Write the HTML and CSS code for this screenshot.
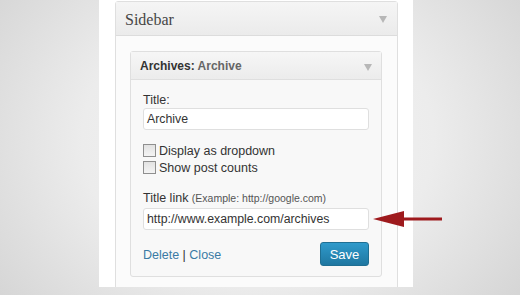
FILE: index.html
```html
<!DOCTYPE html>
<html>
<head>
<meta charset="utf-8">
<link rel="stylesheet" href="styles.css">
</head>
<body>
<div class="stage">
  <div class="panel">
    <div class="sidebar">
      <div class="sidebar-head">
        <h3 class="sidebar-title">Sidebar</h3>
        <span class="tri"></span>
      </div>
      <div class="sidebar-body">
        <div class="widget">
          <div class="widget-head">
            <h4 class="widget-title">Archives: <span class="widget-sub">Archive</span></h4>
            <span class="tri"></span>
          </div>
          <div class="widget-body">
            <div class="label">Title:</div>
            <div class="field">Archive</div>
            <div class="checks">
              <div class="check"><span class="box"></span>Display as dropdown</div>
              <div class="check"><span class="box"></span>Show post counts</div>
            </div>
            <div class="label label-link">Title link <small>(Example: http://google.com)</small></div>
            <div class="field field-link">http://www.example.com/archives</div>
            <div class="actions">
              <div class="links"><a class="lnk">Delete</a> | <a class="lnk">Close</a></div>
              <button class="save">Save</button>
            </div>
          </div>
        </div>
      </div>
    </div>
  </div>
  <svg class="arrow" width="72" height="18" viewBox="0 0 72 18">
    <polygon points="0,9 31,1 31,17" fill="#9e1a1d"/>
    <rect x="30" y="7.5" width="39" height="3" fill="#9e1a1d"/>
  </svg>
</div>
</body>
</html>
```
FILE: styles.css
```css
* { box-sizing: border-box; }
html, body { margin: 0; padding: 0; }
body {
  width: 520px;
  height: 295px;
  overflow: hidden;
  font-family: "Liberation Sans", Arial, sans-serif;
  background: radial-gradient(ellipse 320px 260px at 258px 140px, #f6f6f6 0%, #ececec 55%, #d6d6d6 100%);
}
.stage {
  position: relative;
  width: 520px;
  height: 295px;
}
.panel {
  margin-left: 99px;
  width: 314px;
  height: 287px;
  background: #fff;
  padding: 1px 15px 0 16px;
  overflow: hidden;
}
.sidebar {
  border: 1px solid #dfdfdf;
  border-radius: 3px 3px 0 0;
  background: #fbfbfb;
  height: 300px;
}
.sidebar-head {
  height: 34px;
  display: flex;
  align-items: center;
  justify-content: space-between;
  padding: 0 10px 0 9px;
  background: linear-gradient(#f5f5f5, #ebebeb);
  border-bottom: 1px solid #dcdcdc;
}
.sidebar-title {
  margin: 0;
  font-family: "Liberation Serif", "Times New Roman", serif;
  font-weight: normal;
  font-size: 16px;
  color: #464646;
  padding-top: 2px;
}
.tri {
  width: 0;
  height: 0;
  border-left: 4px solid transparent;
  border-right: 4px solid transparent;
  border-top: 7px solid #b7b7b7;
  margin-top: 2px;
}
.sidebar-body {
  padding: 15px 15px 0 14px;
}
.widget {
  border: 1px solid #dfdfdf;
  border-radius: 3px;
  background: #f8f8f8;
}
.widget-head {
  height: 28px;
  display: flex;
  align-items: center;
  justify-content: space-between;
  padding: 0 9px 0 9px;
  background: linear-gradient(#f6f6f6, #ececec);
  border-bottom: 1px solid #dfdfdf;
}
.widget-title {
  margin: 0;
  font-size: 12px;
  font-weight: bold;
  color: #333;
}
.widget-sub { color: #666; }
.widget-head .tri { margin-top: 4px; }
.widget-body {
  padding: 12px 12px 10px 12px;
}
.label {
  font-size: 12.5px;
  line-height: 16px;
  color: #333;
}
.label small {
  font-size: 10.5px;
  color: #555;
}
.field {
  height: 22px;
  border: 1px solid #dfdfdf;
  border-radius: 3px;
  background: #fff;
  font-size: 12.3px;
  line-height: 20px;
  color: #333;
  padding-left: 3px;
}
.checks {
  margin-top: 12px;
}
.check {
  display: flex;
  align-items: center;
  height: 17px;
  font-size: 12.5px;
  color: #333;
}
.box {
  width: 13px;
  height: 13px;
  border: 1px solid #8f8f8f;
  background: linear-gradient(#e2e2e2, #f4f4f4);
  margin-right: 3px;
  flex: none;
}
.label-link {
  margin-top: 14px;
}
.field-link {
  margin-top: 2px;
}
.actions {
  margin-top: 12px;
  display: flex;
  align-items: center;
  justify-content: space-between;
}
.links {
  font-size: 12.5px;
  color: #333;
  padding-top: 2px;
}
.lnk { color: #3a7ba5; }
.save {
  width: 49px;
  height: 24px;
  border: 1px solid #1f6f93;
  border-radius: 3px;
  background: linear-gradient(#2f9acb, #1f77a1);
  color: #fff;
  font-family: "Liberation Sans", Arial, sans-serif;
  font-size: 13px;
  padding: 0;
}
.arrow {
  position: absolute;
  left: 373px;
  top: 210px;
}
```
